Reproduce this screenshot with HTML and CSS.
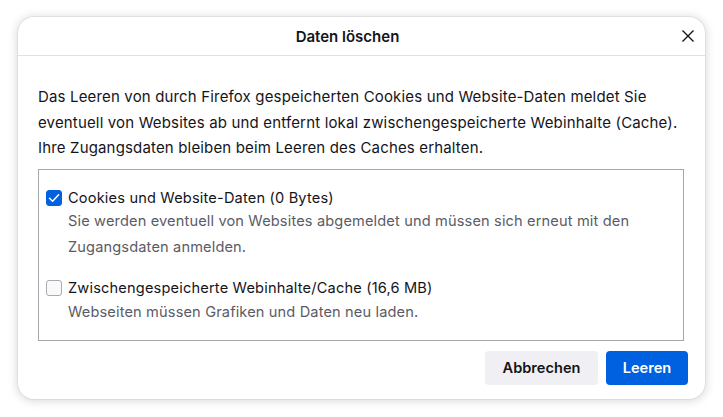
FILE: index.html
```html
<!DOCTYPE html>
<html lang="de">
<head>
<meta charset="utf-8">
<link rel="stylesheet" href="styles.css">
</head>
<body>
<div class="dialog">
  <div class="header">
    <div class="title">Daten löschen</div>
    <button class="close" aria-label="Schließen">
      <svg width="14" height="14" viewBox="0 0 14 14"><path d="M1.5 1.5 L12.5 12.5 M12.5 1.5 L1.5 12.5" stroke="#15141a" stroke-width="1.4" fill="none"/></svg>
    </button>
  </div>
  <div class="content">
    <p class="intro">Das Leeren von durch Firefox gespeicherten Cookies und Website-Daten meldet Sie eventuell von Websites ab und entfernt lokal zwischengespeicherte Webinhalte (Cache). Ihre Zugangsdaten bleiben beim Leeren des Caches erhalten.</p>
    <div class="box">
      <div class="option">
        <div class="row">
          <span class="check checked"><svg width="16" height="16" viewBox="0 0 16 16"><path d="M3.5 8.2 L6.6 11.2 L12.6 4.8" stroke="#fff" stroke-width="1.5" fill="none" stroke-linecap="round" stroke-linejoin="round"/></svg></span>
          <span class="label">Cookies und Website-Daten (0 Bytes)</span>
        </div>
        <div class="desc">Sie werden eventuell von Websites abgemeldet und müssen sich erneut mit den Zugangsdaten anmelden.</div>
      </div>
      <div class="option second">
        <div class="row">
          <span class="check"></span>
          <span class="label">Zwischengespeicherte Webinhalte/Cache (16,6 MB)</span>
        </div>
        <div class="desc tight">Webseiten müssen Grafiken und Daten neu laden.</div>
      </div>
    </div>
    <div class="buttons">
      <button class="btn secondary">Abbrechen</button>
      <button class="btn primary">Leeren</button>
    </div>
  </div>
</div>
</body>
</html>
```

FILE: styles.css
```css
html, body {
  margin: 0;
  padding: 0;
  background: #ffffff;
}
body {
  padding: 17px 18px;
  font-family: Inter, "Noto Sans", "Liberation Sans", sans-serif;
  color: #15141a;
}
.dialog {
  width: 687px;
  height: 382px;
  box-sizing: border-box;
  background: #fff;
  border-radius: 16px;
  box-shadow: 0 0 0 1px rgba(0,0,0,0.05), 0 1px 8px 2px rgba(0,0,0,0.13);
  display: flex;
  flex-direction: column;
}
.header {
  height: 38px;
  border-bottom: 1px solid #e0e0e6;
  display: flex;
  align-items: center;
  justify-content: center;
  position: relative;
}
.title {
  font-size: 15px;
  font-weight: 600;
  margin-right: 28px;
}
.close {
  position: absolute;
  right: 10px;
  top: 12px;
  width: 14px;
  height: 14px;
  padding: 0;
  border: none;
  background: none;
  display: flex;
}
.content {
  padding: 28px 17px 0 20px;
  display: flex;
  flex-direction: column;
}
.intro {
  margin: 0;
  font-size: 15px;
  letter-spacing: 0.16px;
  line-height: 25.5px;
}
.box {
  margin-top: 8px;
  height: 172px;
  box-sizing: border-box;
  border: 1px solid #a6a6ad;
  margin-right: 4px;
  padding: 18px 8px 0 7px;
}
.row {
  display: flex;
  align-items: center;
  gap: 6px;
  height: 20px;
}
.check {
  width: 16px;
  height: 16px;
  box-sizing: border-box;
  border: 1px solid #a8a8b0;
  border-radius: 3px;
  background: #f9f9fb;
  display: flex;
  flex: none;
}
.check.checked {
  background: #0061e0;
  border-color: #0061e0;
}
.check svg { margin: -1px; }
.label {
  font-size: 14.6px;
  letter-spacing: 0.17px;
}
.desc {
  margin-left: 22px;
  font-size: 14.6px;
  letter-spacing: 0.14px;
  line-height: 26px;
  color: #5b5b66;
  padding-right: 10px;
}
.desc.tight {
  margin-top: 1px;
}
.second {
  margin-top: 18px;
}
.buttons {
  display: flex;
  justify-content: flex-end;
  gap: 8px;
  margin-top: 10px;
}
.btn {
  height: 34px;
  border: none;
  border-radius: 4px;
  font-family: inherit;
  font-size: 14.6px;
  font-weight: 600;
  padding: 0 16px;
}
.secondary {
  width: 113px;
  background: #f0f0f4;
  color: #15141a;
}
.primary {
  width: 82px;
  background: #0061e0;
  color: #fff;
}
```
